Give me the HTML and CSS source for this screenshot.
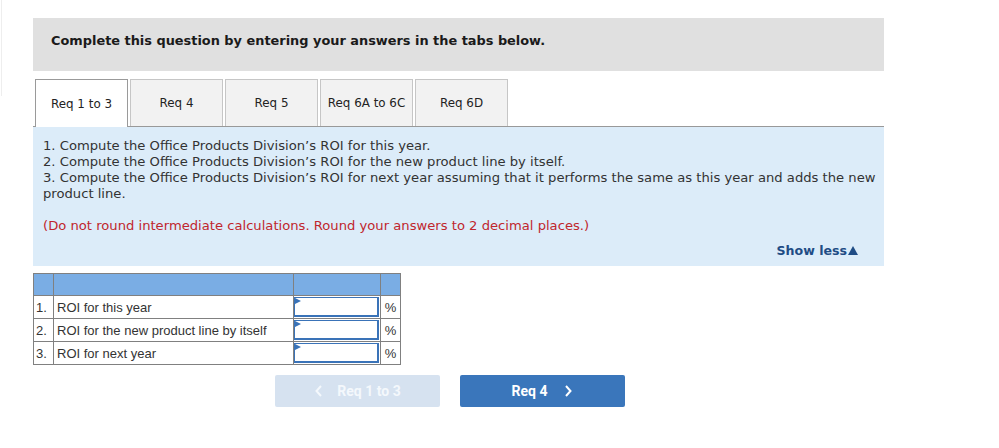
FILE: index.html
```html
<!DOCTYPE html>
<html>
<head>
<meta charset="utf-8">
<link rel="stylesheet" href="styles.css">
</head>
<body>
<div class="edge"></div>
<div class="wrap">
  <div class="head">Complete this question by entering your answers in the tabs below.</div>
  <div class="tabs">
    <div class="tab active">Req 1 to 3</div>
    <div class="tab">Req 4</div>
    <div class="tab">Req 5</div>
    <div class="tab">Req 6A to 6C</div>
    <div class="tab">Req 6D</div>
  </div>
  <div class="panel">
    <p class="q">1. Compute the Office Products Division’s ROI for this year.<br>2. Compute the Office Products Division’s ROI for the new product line by itself.<br>3. Compute the Office Products Division’s ROI for next year assuming that it performs the same as this year and adds the new product line.</p>
    <p class="note">(Do not round intermediate calculations. Round your answers to 2 decimal places.)</p>
    <div class="more"><span>Show less</span><svg class="tri" width="10" height="9" viewBox="0 0 10 9"><path d="M5 0 L10 9 L0 9 Z" fill="currentColor"/></svg></div>
  </div>
  <table class="grid">
    <tr class="hdr"><td class="n"></td><td class="l"></td><td class="i"></td><td class="p"></td></tr>
    <tr><td class="n">1.</td><td class="l">ROI for this year</td><td class="i"><div class="inp"></div></td><td class="p">%</td></tr>
    <tr><td class="n">2.</td><td class="l">ROI for the new product line by itself</td><td class="i"><div class="inp"></div></td><td class="p">%</td></tr>
    <tr><td class="n">3.</td><td class="l">ROI for next year</td><td class="i"><div class="inp"></div></td><td class="p">%</td></tr>
  </table>
  <div class="nav">
    <div class="btn prev"><svg width="10" height="14" viewBox="0 0 10 14"><path d="M7 2 L2.5 7 L7 12" fill="none" stroke="currentColor" stroke-width="2"/></svg><span>Req 1 to 3</span></div>
    <div class="btn next"><span>Req 4</span><svg width="10" height="14" viewBox="0 0 10 14"><path d="M3 2 L7.5 7 L3 12" fill="none" stroke="currentColor" stroke-width="2"/></svg></div>
  </div>
</div>
</body>
</html>
```
FILE: styles.css
```css
html, body { margin: 0; padding: 0; background: #fff; }
body { font-family: "DejaVu Sans", Verdana, sans-serif; color: #333; }
.edge { position: absolute; left: 1px; top: 0; width: 1px; height: 96px; background: #eeeeee; }
.wrap { margin: 18px 0 0 33px; width: 851px; }
.head { height: 38px; background: #e0e0e0; padding: 15px 0 0 18px; font-weight: bold; font-size: 12.9px; line-height: 16px; color: #1a1a1a; }
.tabs { display: flex; gap: 2px; padding-left: 2px; margin-top: 8px; border-bottom: 1px solid #999; height: 47px; }
.tab { width: 91px; height: 46px; border: 1px solid #c6c6c6; border-bottom: none; background: #f2f2f2; display: flex; align-items: center; justify-content: center; font-size: 11.9px; color: #222; }
.tab.active { background: #fff; border-color: #9a9a9a; height: 47px; }
.panel { background: #dcecf9; padding: 11px 6px 6px 10px; height: 122px; }
.q { margin: 0; font-size: 13.15px; line-height: 16px; color: #333; }
.note { margin: 16px 0 0; font-size: 13.15px; line-height: 16px; color: #c0262d; }
.more { margin-top: 9px; margin-right: 20px; display: flex; justify-content: flex-end; align-items: center; font-weight: bold; font-size: 12.6px; color: #1f4c85; line-height: 16px; }
.tri { margin-left: 1px; margin-top: -1px; }
.grid { margin-top: 7px; border-collapse: collapse; font-family: "Liberation Sans", Arial, sans-serif; font-size: 13px; color: #333; }
.grid td { border: 1px solid #808080; height: 21px; padding: 0; }
.grid .n { width: 17px; padding-left: 2px; }
.grid .l { width: 236px; padding-left: 3px; }
.grid .i { width: 86px; padding: 0; }
.grid .p { width: 19px; text-align: center; }
.hdr td { background: #7aade4; }
.inp { position: relative; height: 17px; margin: 1px 1px 1px 0; border: 2px solid #3a73b8; border-top-width: 1px; border-left-width: 1px; background: #fff; }
.inp::before { content: ""; position: absolute; left: 0; top: 0; border-left: 6px solid #3a73b8; border-top: 3px solid transparent; border-bottom: 3px solid transparent; }
.nav { display: flex; gap: 20px; margin-top: 10px; padding-left: 242px; }
.btn { width: 165px; height: 32px; border-radius: 2px; display: flex; align-items: center; justify-content: center; gap: 13px; font-family: Roboto, "Liberation Sans", sans-serif; font-weight: bold; font-size: 14px; color: #fff; }
.prev { background: #d6e2f0; color: #f4f8fc; }
.next { background: #3a76bb; gap: 16px; }
```
